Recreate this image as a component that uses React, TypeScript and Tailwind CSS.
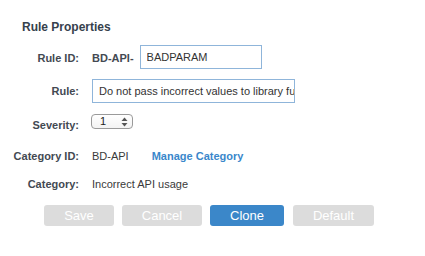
import React from "react";

const font = { fontFamily: '"Liberation Sans", Arial, Helvetica, sans-serif' };

export default function App() {
  return (
    <div className="w-[425px] h-[256px] bg-white overflow-hidden" style={font}>
      <div className="pl-[22px] pt-[19px] text-[12px] leading-[16px] font-bold text-[#36414c]">
        Rule Properties
      </div>

      {/* Row 1 */}
      <div className="flex items-start mt-[10px]">
        <div className="w-[79px] text-right text-[11px] leading-[13px] font-bold text-[#434952] mt-[7px]">
          Rule ID:
        </div>
        <div className="ml-[13px] flex items-start">
          <span className="text-[11px] leading-[13px] font-bold text-[#434952] mt-[7px]">BD-API-</span>
          <input
            readOnly
            value="BADPARAM"
            className="ml-[6px] w-[122px] h-[24px] border border-[#8fb5da] pl-[6px] text-[11px] text-[#333] outline-none"
            style={font}
          />
        </div>
      </div>

      {/* Row 2 */}
      <div className="flex items-start mt-[10px]">
        <div className="w-[79px] text-right text-[11px] leading-[13px] font-bold text-[#434952] mt-[6px]">
          Rule:
        </div>
        <input
          readOnly
          value="Do not pass incorrect values to library functions"
          className="ml-[13px] w-[203px] h-[24px] border border-[#8fb5da] pl-[6px] text-[11px] text-[#333] outline-none"
          style={font}
        />
      </div>

      {/* Row 3 */}
      <div className="flex items-start mt-[11px]">
        <div className="w-[79px] text-right text-[11px] leading-[13px] font-bold text-[#434952] mt-[5px]">
          Severity:
        </div>
        <div className="ml-[12px] w-[42px] h-[15px] rounded-[4px] border border-[#9a9a9a] bg-gradient-to-b from-white to-[#f3f3f3] flex items-center justify-between pl-[8px] pr-[4px] text-[11px] text-[#222]">
          <span>1</span>
          <svg width="7" height="10" viewBox="0 0 7 10">
            <path d="M3.5 0.5 L6.5 4 L0.5 4 Z" fill="#555" />
            <path d="M3.5 9.5 L6.5 6 L0.5 6 Z" fill="#555" />
          </svg>
        </div>
      </div>

      {/* Row 4 */}
      <div className="flex items-start mt-[18px] text-[11px] leading-[13px]">
        <div className="w-[79px] text-right font-bold text-[#434952]">Category ID:</div>
        <div className="ml-[13px] text-[#3a3a3a]">BD-API</div>
        <div className="ml-[23px] font-bold text-[#3a87cb]">Manage Category</div>
      </div>

      {/* Row 5 */}
      <div className="flex items-start mt-[15px] text-[11px] leading-[13px]">
        <div className="w-[79px] text-right font-bold text-[#434952]">Category:</div>
        <div className="ml-[13px] text-[#3a3a3a]">Incorrect API usage</div>
      </div>

      {/* Buttons */}
      <div className="flex mt-[14px] pl-[44px] text-[13px] text-white">
        <div className="w-[70px] h-[21px] rounded-[3px] bg-[#dcdcdc] flex items-center justify-center">Save</div>
        <div className="ml-[8px] w-[80px] h-[21px] rounded-[3px] bg-[#dcdcdc] flex items-center justify-center">Cancel</div>
        <div className="ml-[8px] w-[74px] h-[21px] rounded-[3px] bg-[#3b87c9] flex items-center justify-center">Clone</div>
        <div className="ml-[9px] w-[81px] h-[21px] rounded-[3px] bg-[#dcdcdc] flex items-center justify-center">Default</div>
      </div>
    </div>
  );
}
